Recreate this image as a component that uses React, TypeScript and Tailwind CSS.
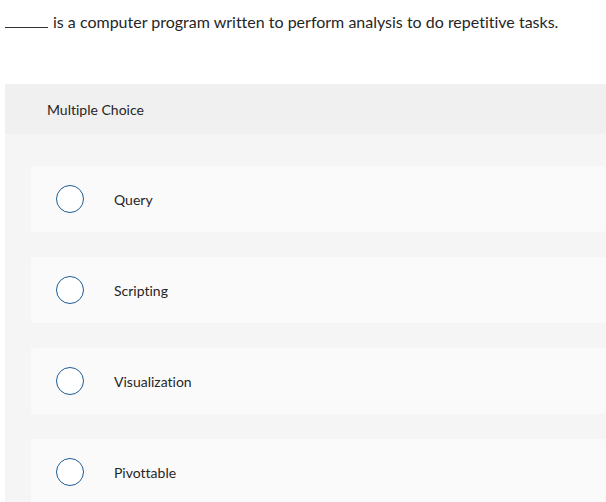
export default function App() {
  const options = ["Query", "Scripting", "Visualization", "Pivottable"];

  return (
    <main className="min-h-[502px] bg-white font-['Lato','Liberation_Sans',sans-serif] text-[#262626] [font-variant-ligatures:none]">
      <p className="pl-[5px] pt-[10px] text-[16px] leading-[24px]">
        <span className="mr-[5px] inline-block w-[43px] border-b border-[#333] align-baseline"></span>
        is a computer program written to perform analysis to do repetitive tasks.
      </p>

      <div className="ml-[5px] mt-[50px]">
        <div className="flex h-[50px] items-center bg-[#f0f0f0] pl-[42px] text-[14px]">
          Multiple Choice
        </div>

        <div className="flex flex-col gap-[25px] bg-[#f5f5f5] pl-[26px] pt-[32px] pb-[20px]">
          {options.map((option) => (
            <label
              key={option}
              className="flex h-[66px] items-center rounded-[2px] bg-[#fafafa] pl-[25px]"
            >
              <span className="h-[28px] w-[28px] rounded-full border-[1.5px] border-[#1d5c96] bg-white"></span>
              <span className="ml-[30px] text-[14px]">{option}</span>
            </label>
          ))}
        </div>
      </div>
    </main>
  );
}
